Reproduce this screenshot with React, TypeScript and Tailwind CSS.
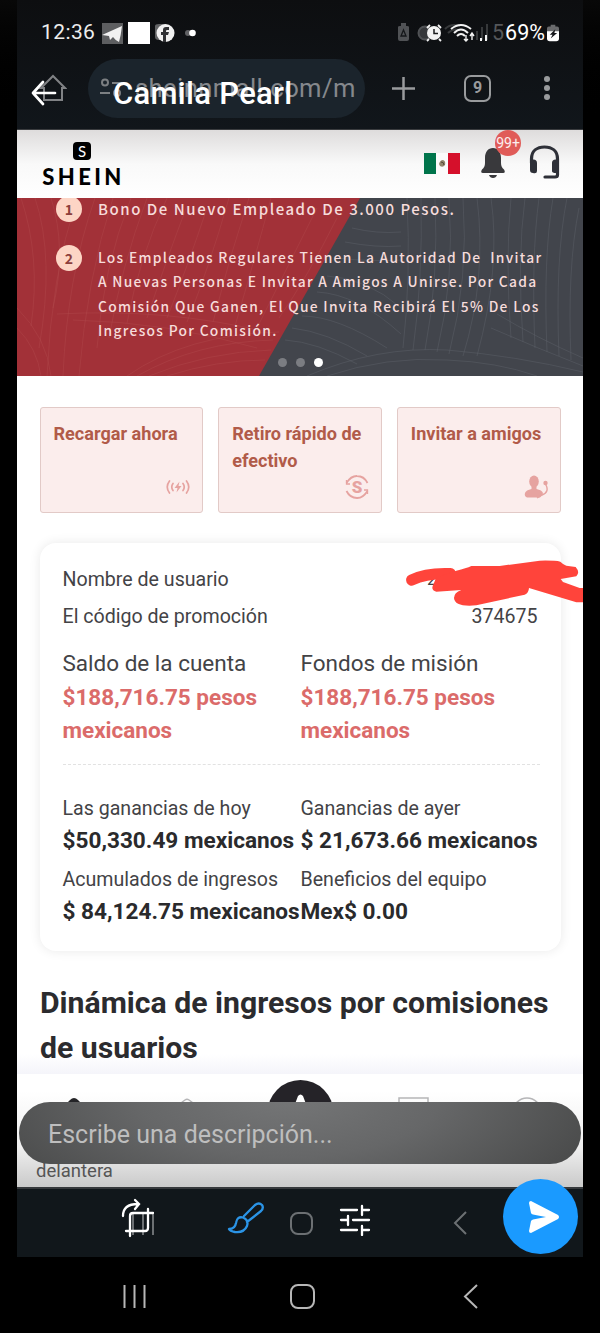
import type { ReactNode } from "react";

const EmpleadoBanner = () => {
  const lines = [
    "Los Empleados Regulares Tienen La Autoridad De\u00a0 Invitar",
    "A Nuevas Personas E Invitar A Amigos A Unirse. Por Cada",
    "Comisión Que Ganen, El Que Invita Recibirá El 5% De Los",
    "Ingresos Por Comisión.",
  ];

  return (
    <section className="relative h-[178px] shrink-0 overflow-hidden bg-[#42454c] font-['Noto_Sans_CJK_SC','Noto_Sans',sans-serif] font-medium text-[#f6dcdb]">
      <svg className="absolute inset-0" width="566" height="178" fill="none">
        <path d="M0 0H343L242 178H0Z" fill="#a23138" />
        <g stroke="#b34b4e" strokeOpacity=".38">
          <path d="M4 0Q24 60 14 128M18 0Q38 60 22 150M34 0Q50 50 36 110M60 0Q34 80 30 178M78 0Q50 80 46 178M96 0Q70 80 62 178M114 0Q86 70 80 150M130 0Q104 70 92 140M150 0Q122 60 110 125M170 8Q150 60 130 120M190 10Q170 70 150 120M212 0Q192 70 170 124M232 0Q212 60 196 124M254 0Q238 60 218 128M300 10Q270 70 240 130M320 20Q290 80 262 120" />
          <path d="M40 116Q150 110 250 134M56 122Q150 124 240 150M110 178Q170 136 262 134M120 178Q180 144 256 142M132 178Q190 154 254 152M150 178Q200 162 248 162M0 130Q20 150 24 178M0 110Q30 140 34 178" />
        </g>
        <g stroke="#5b5f67" strokeOpacity=".5">
          <path d="M390 0Q394 80 386 150M404 0Q406 80 396 152M418 0Q422 80 408 152M432 0Q438 80 420 154M446 0Q452 80 432 156M460 0Q470 80 446 158M474 0Q484 70 460 158M494 0Q488 60 494 140M508 0Q500 60 506 144M522 0Q514 60 518 150M536 0Q526 60 530 154M550 0Q538 60 542 158M562 10Q550 70 554 162" />
          <path d="M335 30Q360 36 384 34M328 44Q360 50 384 48M320 60Q355 64 384 62M310 78Q350 80 384 110M300 94Q340 96 384 136M285 118Q320 118 370 150M275 130Q310 134 350 158M268 142Q300 144 340 166M290 178Q360 148 430 152Q500 158 566 174M310 178Q370 158 430 162Q480 164 520 178M480 116Q520 140 566 160M474 130Q520 150 566 168" />
        </g>
      </svg>
      <div className="relative pl-[39px]">
        <div className="-mt-px flex h-6 items-center gap-[16px]">
          <Numero n="1" />
          <p className="whitespace-pre text-[15px] leading-6 tracking-[1.53px]">
            Bono De Nuevo Empleado De 3.000 Pesos.
          </p>
        </div>
        <div className="mt-[24px] flex gap-[16px]">
          <Numero n="2" />
          <div className="text-[13.8px] leading-[24.3px] tracking-[1.3px]">
            {lines.map((line) => (
              <p key={line} className="whitespace-pre">
                {line}
              </p>
            ))}
          </div>
        </div>
      </div>
      <div className="absolute bottom-[9px] left-[261px] flex gap-[9px]">
        <i className="size-[9px] rounded-full bg-[#7b7d82]" />
        <i className="size-[9px] rounded-full bg-[#7b7d82]" />
        <i className="size-[9px] rounded-full bg-white" />
      </div>
    </section>
  );
};

const Numero = ({ n }: { n: string }) => (
  <span className="flex size-[26px] shrink-0 items-center justify-center rounded-full bg-[#fdd5c5] text-[14px] font-bold leading-none text-[#8d3f3c]">
    {n}
  </span>
);

const Accion = ({ label, children }: { label: string; children: ReactNode }) => (
  <button className="flex h-[106px] flex-1 flex-col justify-between rounded-[3px] border border-[#e2cac7] bg-[#fbedec] pb-[13px] pl-[13px] pr-3 pt-[12px] text-left">
    <span className="text-[18.1px] font-bold leading-[27px] text-[#b15b49]">{label}</span>
    <span className="flex size-6 items-center justify-center self-end text-[#e6a3a0]">
      {children}
    </span>
  </button>
);

const Acciones = () => (
  <div className="mx-[22.500px] mt-[31px] flex shrink-0 gap-[15px]">
    <Accion label="Recargar ahora">
      <svg width="24" height="24" viewBox="0 0 24 24" fill="none" stroke="currentColor" strokeWidth="1.7" strokeLinecap="round">
        <path d="M3.5 6Q-1 12 3.5 18M7 8.5Q4.5 12 7 15.500M20.500 6Q25 12 20.500 18M17 8.500Q19.500 12 17 15.500" />
        <path d="M13.500 6.500 8.500 13H11.500L10.500 17.500 15.500 11H12.500Z" fill="currentColor" stroke="none" />
      </svg>
    </Accion>
    <Accion label="Retiro rápido de efectivo">
      <svg width="24" height="24" viewBox="0 0 24 24" fill="none" stroke="currentColor" strokeWidth="1.8">
        <path d="M1.500 8Q6 .8 12 1Q19 1 22.500 8M22.500 16Q18 23.200 12 23Q5 23 1.500 16" />
        <path d="M1.500 5V9H5M22.500 19V15H19" strokeWidth="1.300" />
        <text x="12" y="18" textAnchor="middle" fill="currentColor" stroke="none" className="font-[Roboto,sans-serif] text-[17px] font-black">S</text>
      </svg>
    </Accion>
    <Accion label="Invitar a amigos">
      <svg width="24" height="24" viewBox="0 0 24 24" fill="currentColor">
        <ellipse cx="10" cy="6.500" rx="4.800" ry="6" />
        <path d="M7.500 11H12.500V14Q18 15 19 18Q19 20 16 22.500H3Q0 21 1 18Q2 15 7.500 14Z" />
        <circle cx="21.500" cy="8" r="2.200" />
        <path d="M21.500 9Q26 17 18 20L13 23" fill="none" stroke="currentColor" strokeWidth="1.400" />
      </svg>
    </Accion>
  </div>
);

const Saldo = ({ label, value }: { label: string; value: string }) => (
  <div>
    <p className="text-[22.5px] leading-[36px]">{label}</p>
    <p className="text-[22.5px] font-bold leading-[33px] text-[#db6b6a]">{value}</p>
  </div>
);

const Ingreso = ({ label, value }: { label: string; value: string }) => (
  <div className="h-[71px]">
    <p className="text-[19.6px] leading-[30px]">{label}</p>
    <p className="text-[22.6px] font-bold leading-[33px] text-[#2a2a2c]">{value}</p>
  </div>
);

const Resumen = () => (
  <section className="mx-[22.500px] mt-[30px] h-[408px] shrink-0 rounded-[16px] bg-white px-[23px] pt-[18px] text-[#434346] shadow-[0_0_12px_rgba(0,0,0,0.09)]">
    <div className="flex h-[37px] items-center justify-between text-[19.6px]">
      <span>Nombre de usuario</span>
      <span className="mr-[101px] text-[17px]">2</span>
    </div>
    <div className="flex h-[37px] items-center justify-between text-[19.6px]">
      <span>El código de promoción</span>
      <span>374675</span>
    </div>
    <div className="mt-[10px] grid grid-cols-[238px_240px]">
      <Saldo label="Saldo de la cuenta" value="$188,716.75 pesos mexicanos" />
      <Saldo label="Fondos de misión" value="$188,716.75 pesos mexicanos" />
    </div>
    <div className="mr-[-2px] mt-[17px] border-t border-dashed border-[#e2e2e2]" />
    <div className="mt-[29px] grid grid-cols-[238px_240px] whitespace-nowrap">
      <Ingreso label="Las ganancias de hoy" value="$50,330.49 mexicanos" />
      <Ingreso label="Ganancias de ayer" value="$ 21,673.66 mexicanos" />
      <Ingreso label="Acumulados de ingresos" value="$ 84,124.75 mexicanos" />
      <Ingreso label="Beneficios del equipo" value="Mex$ 0.00" />
    </div>
  </section>
);

const ShopHeader = () => (
  <header className="flex h-[68px] shrink-0 items-start justify-between bg-gradient-to-b from-[#dedcdc] via-[#f9f9f9] via-50% to-white pl-[25px] pr-[23px]">
    <div className="flex w-[80px] flex-col items-center pt-[12px]">
      <span className="flex size-[18px] items-center justify-center rounded-[4px] bg-black font-[Lato,sans-serif] text-[15px] leading-none text-white">
        S
      </span>
      <span className="mt-[5px] pl-[3px] font-[Lato,sans-serif] text-[22px] font-black leading-[24px] tracking-[3.4px] text-black">
        SHEIN
      </span>
    </div>
    <div className="flex items-start">
      <svg className="mt-[23px]" width="36" height="21" viewBox="0 0 36 21">
        <path fill="#fbfbfb" d="M0 0H36V21H0Z" />
        <path fill="#00744b" d="M0 0H12V21H0Z" />
        <path fill="#d5102b" d="M24 0H36V21H24Z" />
        <path d="M15 11Q16 7 19 7Q22 8 21 12Q19 15 16 13Z" fill="#91866c" />
        <path d="M17 9Q20 9 20 12" stroke="#53483a" fill="none" />
      </svg>
      <div className="relative ml-[21px] mt-[18px]">
        <svg width="24" height="31" viewBox="0 0 24 31" fill="#39393c">
          <path d="M12 0C7 0 4 4 4 10V15Q4 19 1 21.500Q-1 25 2 25H22Q25 25 23 21.500Q20 19 20 15V10C20 4 17 0 12 0ZM8 27H16Q15 30 12 30Q9 30 8 27Z" />
        </svg>
        <span className="absolute -top-[18px] left-[14px] flex size-[26px] items-center justify-center rounded-full bg-[#e05b58] font-[Roboto,sans-serif] text-[14px] text-white/90">
          99+
        </span>
      </div>
      <svg className="ml-[24px] mt-[15px]" width="31" height="35" viewBox="0 0 31 35" fill="none" stroke="#2e3038" strokeWidth="3.200">
        <path d="M2.500 18V14C2.500 6 8 2 15.500 2S28.500 6 28.500 14V30Q28.500 32 26 32H16" strokeLinecap="round" />
        <path d="M1 15Q8 13 8 18V26Q8 29 4 28Q1 28 1 25ZM30 15Q23 13 23 18V26Q23 28 27 28H30Z" fill="#2e3038" stroke="none" />
      </svg>
    </div>
  </header>
);

const BrowserBar = () => (
  <div className="flex h-[130px] shrink-0 flex-col border-b border-[#3a3c3f] bg-gradient-to-b from-[#0d0e10] to-[#11161b] text-[#8b8e91]">
    <div className="flex h-[58px] items-center pl-[380px] pt-[8px] text-[21.5px] text-[#55575a]">
      <svg width="95" height="22" viewBox="0 0 95 22" fill="none" stroke="#505255" strokeWidth="2">
        <path d="M1 5Q1 4 3 4H4V1H9V4H10Q12 4 12 5V17Q12 19 10 19H3Q1 19 1 17Z" fill="#505255" stroke="none" />
        <path d="m4 14 2.500-6 2.500 6Z" stroke="#15171a" strokeWidth="1.300" />
        <circle cx="28" cy="11" r="6.500" fill="#36383b" />
        <path d="M48 7Q54 1 63 4M51 11Q56 6 62 8M80 18V9M85 18V5M90 18V2" stroke="#37393b" />
      </svg>
      <span className="leading-none">5</span>
    </div>
    <div className="flex h-[60px] items-center">
      <svg className="ml-[22px]" width="28" height="28" viewBox="0 0 28 28" fill="none" stroke="#808285" strokeWidth="2">
        <path d="M2 14 14 2 26 14H23V26H5V14Z" />
      </svg>
      <div className="ml-[21px] flex h-[59px] w-[277px] items-center gap-[11px] rounded-full bg-[#1b242c] pl-[12px]">
        <svg width="24" height="20" viewBox="0 0 24 20" fill="none" stroke="#7c7f82" strokeWidth="2">
          <circle cx="5" cy="4.500" r="3" />
          <path d="M12 5H22M0 15H10" />
          <circle cx="17" cy="15" r="3" />
        </svg>
        <span className="text-[25.6px] tracking-[0.4px] text-[#85888c]">sheinnmall.com/m</span>
      </div>
      <svg className="ml-[26px]" width="25" height="25" stroke="#999b9d" strokeWidth="2.500">
        <path d="M12.500 1V24M1 12.500H24" />
      </svg>
      <span className="ml-[48px] flex h-[27px] w-[27px] items-center justify-center rounded-[7px] border-[2.500px] border-[#999b9d] text-[16px] font-bold leading-none text-[#999b9d]">
        9
      </span>
      <div className="ml-[53px] flex flex-col gap-[3px]">
        <i className="size-[6px] rounded-full bg-[#999b9d]" />
        <i className="size-[6px] rounded-full bg-[#999b9d]" />
        <i className="size-[6px] rounded-full bg-[#999b9d]" />
      </div>
    </div>
  </div>
);

const TabBar = () => (
  <div className="relative flex h-[113px] shrink-0 items-end overflow-hidden bg-gradient-to-b from-white from-15% via-[#efefef] via-65% to-[#cacaca]">
    <svg className="absolute left-0 top-0" width="566" height="60" fill="none" stroke="#b5b5b7" strokeWidth="1.500">
      <path d="m45 34 8-8q4-4 8 0l8 8Z" fill="#242427" stroke="none" />
      <path d="m157 34 11-8q2-1.500 4 0l11 8" />
      <circle cx="283.500" cy="39" r="33" fill="#252328" stroke="none" />
      <path d="m278 30 3-8q2.500-3 5 0l3 8v20h-11Z" fill="#fff" stroke="none" />
      <path d="M382 42V24H411V42" />
      <circle cx="510" cy="38" r="14" />
    </svg>
    <span className="mb-[4px] ml-[19px] text-[18.5px] leading-[24px] text-[#555]">delantera</span>
  </div>
);

const SharedPhoto = () => (
  <main className="mx-[17px] flex h-[1257px] flex-col overflow-hidden bg-white">
    <BrowserBar />
    <ShopHeader />
    <EmpleadoBanner />
    <Acciones />
    <Resumen />
    <div className="mt-[24px] h-[99px] shrink-0 bg-gradient-to-b from-white from-80% to-[#f5f5fa] px-[23px] pt-[5px]">
      <h1 className="whitespace-pre text-[30.2px] font-bold leading-[45px] text-[#2b2b2e]">
        {"Dinámica de ingresos por comisiones\nde usuarios"}
      </h1>
    </div>
    <TabBar />
    <div className="flex h-[70px] shrink-0 items-start border-t-2 border-[#36393c] bg-[#11171b]">
      <svg width="566" height="68" fill="none" stroke="#6c7073" strokeWidth="2">
        <path d="M116 24V46M126 24V46M136 24V46" />
        <rect x="274" y="24" width="21" height="21" rx="7" />
        <path d="M449 23 438 34 449 45" />
      </svg>
    </div>
  </main>
);

const PhoneStatus = () => (
  <div className="flex h-[66px] items-center pl-[41px] text-white">
    <span className="w-[61px] text-[21px] tracking-[0.4px] text-[#ededed]">12:36</span>
    <span className="flex size-[21px] items-center bg-[#5d5e60]">
      <svg width="21" height="21" viewBox="0 0 21 21" fill="#f1f1f1">
        <path d="M0 12 20 3Q19 12 17 19Q13 17 11 14L8 17L7 13Z" />
      </svg>
    </span>
    <span className="ml-[5px] size-[22px] bg-white" />
    <svg className="ml-[5px]" width="20" height="20" viewBox="0 0 20 20">
      <path d="M0 3Q0 1 4 1H10V17H4Q0 17 0 14Z" fill="#626365" />
      <circle cx="10.500" cy="10" r="9" fill="#f1f1f1" />
      <path d="M8 19V12H6V9H8V7Q8 4 11 4H14V7H12Q11 7 11 8V9H14L13 12H11V19Z" fill="#303134" />
    </svg>
    <svg className="ml-[10px]" width="14" height="10">
      <circle cx="3" cy="5" r="3" fill="#606164" />
      <circle cx="7.500" cy="5" r="3.300" fill="#fff" />
    </svg>
    <div className="ml-auto mr-[41px] flex items-center">
      <svg width="66" height="20" viewBox="0 0 66 20" fill="none" stroke="#f3f3f3" strokeWidth="1.800">
        <circle cx="9" cy="10" r="7" fill="#f3f3f3" stroke="none" />
        <path d="M2 5 5 2M13 2 16 5M4 16 2 18M14 16 16 18" />
        <path d="M9 6V10.500H13" stroke="#1b1c1e" strokeWidth="1.500" />
        <path d="M26 6Q36-2 46 6M29 10Q36 3 43 10M32 13Q36 9 40 13" strokeWidth="2" />
        <path d="M41 12V18M39 16L41 18 43 16M47 17V10M45 13L47 10 49 13" strokeWidth="1.400" />
        <path d="M56 18V15M61 18V12" strokeWidth="2" />
      </svg>
      <span className="ml-[14px] text-[21.5px] leading-none">69%</span>
      <svg className="ml-[2px]" width="12" height="20" viewBox="0 0 13 20">
        <path d="M4 1H9V3H11Q13 3 13 5V9H0V5Q0 3 2 3H4Z" fill="#6a6b6d" />
        <path d="M0 8H13V16Q13 19 10 19H3Q0 19 0 16Z" fill="#fff" />
        <path d="M9 6 3 12H6L4 16 11 10H8Z" fill="#15161a" />
      </svg>
    </div>
  </div>
);

// Photo editor controls float over the picture being sent
const EditorOverlay = () => (
  <div className="absolute inset-0 flex flex-col text-white">
    <PhoneStatus />
    <div className="flex h-[54px] items-center pl-[31px]">
      <svg width="26" height="26" viewBox="0 0 26 26" fill="none" stroke="#fff" strokeWidth="2.700" strokeLinecap="round" strokeLinejoin="round">
        <path d="M24 13H2M12 2 2 13 12 24" />
      </svg>
      <span className="ml-[56px] text-[31px] font-medium leading-none tracking-[0.3px]">Camila Pearl</span>
    </div>
    <div className="mx-[19px] mt-auto flex h-[62px] items-center rounded-full bg-[radial-gradient(ellipse_60%_220%_at_48%_-10%,#757677_0%,#666768_45%,#484949_100%)] pl-[29px] pt-[3px] text-[25px] text-[#bebebe]">
      Escribe una descripción...
    </div>
    <div className="mt-[15px] flex h-[78px] items-center pl-[120px]">
      <svg width="36" height="40" viewBox="0 0 36 40" fill="none" stroke="#fff" strokeWidth="2.300" strokeLinecap="round">
        <path d="M3 18C3 11 7 6 18 6M15 2 19 6 15 11M10 38V18Q10 15 13 15H33M28 11V30Q28 33 25 33H6" />
      </svg>
      <svg className="ml-[71px]" width="38" height="34" viewBox="0 0 38 34" fill="none" stroke="#2b94e6" strokeWidth="2.300" strokeLinejoin="round" strokeLinecap="round">
        <path d="M17 15 28 4Q32 1 35 4Q37 7 34 10L20 21M9 22Q10 15 16 16.500Q22 19 20 25Q17 32 8 31Q3 30 2 28Q8 28 9 22Z" />
      </svg>
      <svg className="ml-[74px] mt-[4px]" width="32" height="32" viewBox="0 0 32 32" fill="none" stroke="#fff" strokeWidth="2.300" strokeLinecap="round">
        <path d="M2 6H18M23 2V11M23 6H30M2 16H9M9 12V21M14 16H30M2 26H18M23 22V31M23 26H30" />
      </svg>
      <button className="ml-auto mr-[22px] mt-[-3px] flex size-[75px] items-center justify-center rounded-full bg-[#1a9aff]">
        <svg className="ml-[7px]" width="30" height="32" viewBox="0 0 30 32" fill="#fff">
          <path d="M0 2Q0 0 2 0L29 14Q31 16 29 18L2 32Q0 32 0 30L2 20Q2.500 19 4 18.500L17 16Q10 14.500 4 13.500Q2.500 13 2 12Z" />
        </svg>
      </button>
    </div>
    <div className="h-[76px] pt-[19px]">
      <svg width="600" height="40" fill="none" stroke="#b7b7b7" strokeWidth="2">
        <path d="M124.500 9V32M134.500 9V32M144.500 9V32" />
        <rect x="291" y="9" width="23" height="23" rx="7" />
        <path d="M477 9 465 20.500 477 32" />
      </svg>
    </div>
  </div>
);

export default function App() {
  return (
    <div className="relative h-[1333px] w-[600px] overflow-hidden bg-gradient-to-b from-[#080808] via-black via-10% to-black font-[Roboto,sans-serif]">
      <SharedPhoto />
      <svg className="absolute left-[403px] top-[558px]" width="180" height="50" viewBox="310 490 540 150" fill="#ff443b">
        <path d="M336 556Q380 534 452 537" fill="none" stroke="#ff443b" strokeWidth="34" strokeLinecap="round" />
        <path d="M402 567 410 548 470 528Q500 521 515 514H600L720 498Q765 497 782 501Q792 511 800 513L828 517Q842 533 830 545L783 553 790 562 840 580H850V623H830L688 580Q687 596 675 600L530 632Q465 638 463 610Q463 594 485 586L410 591Q391 587 402 567Z" />
      </svg>
      <EditorOverlay />
    </div>
  );
}
